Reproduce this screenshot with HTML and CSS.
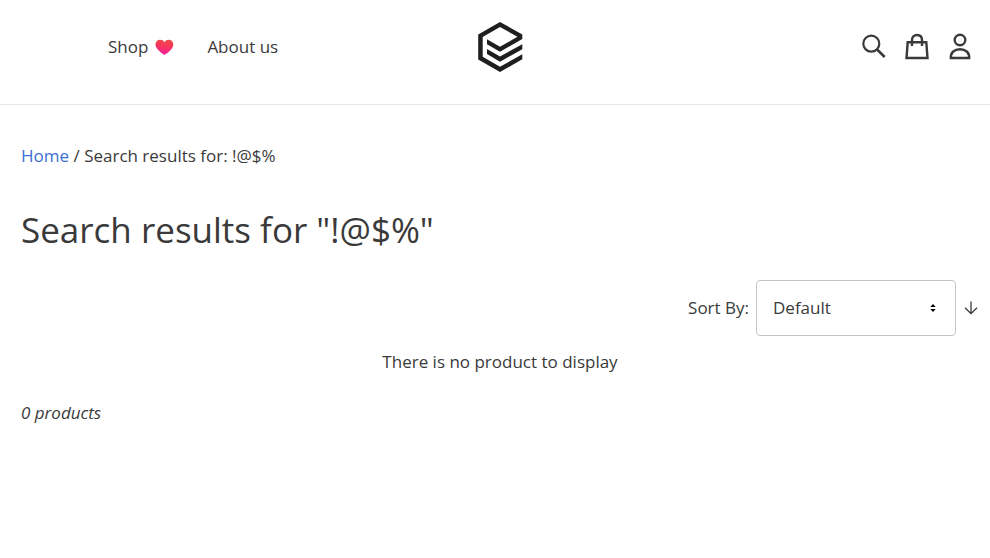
FILE: index.html
```html
<!DOCTYPE html>
<html lang="en">
<head>
<meta charset="utf-8">
<meta name="viewport" content="width=device-width, initial-scale=1">
<title>Search results</title>
<link rel="stylesheet" href="styles.css">
</head>
<body>
<header class="header">
  <nav class="nav" aria-label="Main">
    <a href="#" class="nav-link">Shop
      <svg class="heart" viewBox="0 0 20 18" aria-hidden="true">
        <defs><linearGradient id="heart-fill" x1="0.6" y1="0" x2="0.4" y2="1"><stop offset="0" stop-color="#ee4b45"/><stop offset="0.45" stop-color="#f7345f"/><stop offset="1" stop-color="#ee1fa0"/></linearGradient></defs>
        <path fill="url(#heart-fill)" d="M10.500 17C8.500 16 1.500 11.300 1.500 6.600C1.500 3.500 3.700 1.800 6 1.800C7.900 1.800 9.700 2.600 10.500 4.300C11.300 2.600 13 1.800 14.900 1.800C17.200 1.800 19.300 3.500 19.300 6.600C19.300 11.300 12.500 16 10.500 17Z"/>
      </svg>
    </a>
    <a href="#" class="nav-link">About us</a>
  </nav>
  <a href="#" class="logo" aria-label="Store home">
    <svg viewBox="0 0 46 50" aria-hidden="true">
      <g fill="#1f1f20">
        <path fill-rule="evenodd" d="M23 0L45.300 12.500V17L23 29.700L10 22.200V17.300L23 24.700L40.500 14.700L23 5.100L5.700 15V34.800L23 44.800L45.300 32.300V37.300L23 50L1.200 37.400V12.500Z"/>
        <path d="M10 27L23 34.500L45.300 22.200V27.200L23 39.700L10 32.100Z"/>
      </g>
    </svg>
  </a>
  <div class="actions">
    <button type="button" class="icon-button" aria-label="Search">
      <svg viewBox="0 0 26 28" aria-hidden="true"><g fill="none" stroke="#3a3a3a" stroke-width="2.200"><circle cx="10.300" cy="10.700" r="8"/><path d="M16.300 16.700L23.700 24" stroke-width="2.600"/></g></svg>
    </button>
    <button type="button" class="icon-button" aria-label="Cart">
      <svg viewBox="0 0 26 28" aria-hidden="true"><g fill="none" stroke="#3a3a3a" stroke-width="2.400"><path d="M3.700 9.200H22.300L23.500 25H2.500Z"/><path d="M8 13V7C8 3.700 10 2 13 2S18 3.700 18 7V13"/></g></svg>
    </button>
    <button type="button" class="icon-button" aria-label="Account">
      <svg viewBox="0 0 26 28" aria-hidden="true"><g fill="none" stroke="#3a3a3a" stroke-width="2.400"><circle cx="13" cy="7" r="5.300"/><path d="M3.800 25C3.500 19.400 7.500 16.200 13 16.200S22.500 19.400 22.200 25Z"/></g></svg>
    </button>
  </div>
</header>
<main class="main">
  <nav class="breadcrumb" aria-label="Breadcrumb"><a href="#">Home</a> / <span>Search results for: !@$%</span></nav>
  <h1 class="title">Search results for "!@$%"</h1>
  <div class="sort">
    <label for="sort-by">Sort By:</label>
    <div class="select-wrap">
      <select id="sort-by" class="select"><option>Default</option></select>
      <svg class="caret" viewBox="0 0 6 8" aria-hidden="true"><path d="M3 0L5.700 3H0.300ZM3 8L5.700 5H0.300Z"/></svg>
    </div>
    <button type="button" class="direction" aria-label="Sort descending">
      <svg viewBox="0 0 14 14" aria-hidden="true"><path fill="none" stroke="#3a3a3a" stroke-width="1.300" d="M7 0.500V12.500M1 6.700L7 12.700L13 6.700"/></svg>
    </button>
  </div>
  <p class="empty">There is no product to display</p>
  <p class="count">0 products</p>
</main>
</body>
</html>
```

FILE: styles.css
```css
* {
  box-sizing: border-box;
}

body {
  margin: 0;
  background: #fff;
  color: #3a3a3a;
  font: 17px/24px "Segoe UI", "Open Sans", sans-serif;
}

a {
  color: inherit;
  text-decoration: none;
}

button {
  padding: 0;
  border: 0;
  background: none;
  cursor: pointer;
}

svg {
  display: block;
}

.header {
  display: grid;
  grid-template-columns: 1fr auto 1fr;
  align-items: start;
  padding: 22px 17px 32px 27px;
  border-bottom: 1px solid #e6e6e6;
}

.nav {
  display: flex;
  gap: 33px;
  padding: 13px 0 0 81px;
}

.nav-link {
  display: flex;
  align-items: center;
  gap: 6px;
}

.heart {
  width: 20px;
  height: 18px;
}

.logo svg {
  width: 46px;
  height: 50px;
}

.actions {
  display: flex;
  justify-content: flex-end;
  gap: 17px;
  padding-top: 11px;
}

.icon-button svg {
  width: 26px;
  height: 28px;
}

.main {
  padding: 39px 11px 40px 21px;
}

.breadcrumb a {
  color: #3b6fd4;
}

.title {
  margin: 37px 0 25px;
  font-size: 35px;
  line-height: 50px;
  font-weight: 400;
}

.sort {
  display: flex;
  align-items: center;
  justify-content: flex-end;
  gap: 7px;
}

.select-wrap {
  position: relative;
  width: 200px;
}

.select {
  width: 100%;
  height: 56px;
  padding: 0 16px;
  border: 1px solid #c3c4c9;
  border-radius: 4px;
  appearance: none;
  background: #fff;
  color: inherit;
  font: inherit;
}

.caret {
  position: absolute;
  top: 24px;
  right: 20px;
  width: 6px;
  height: 8px;
  pointer-events: none;
}

.direction {
  padding: 0 1px;
}

.direction svg {
  width: 14px;
  height: 14px;
}

.empty {
  margin: 14px 0 27px;
  text-align: center;
}

.count {
  margin: 0;
  font-style: italic;
}
```
